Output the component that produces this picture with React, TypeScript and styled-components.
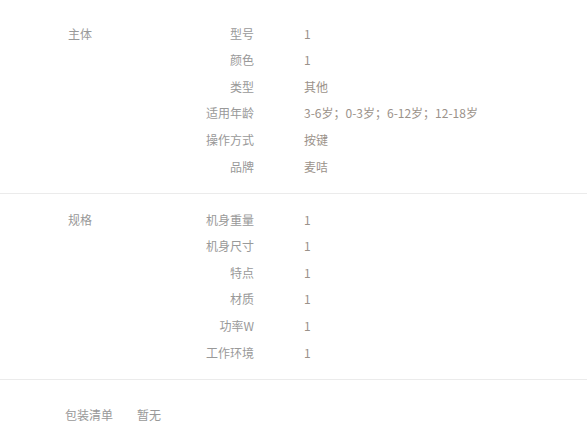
import React from 'react';
import styled, { createGlobalStyle } from 'styled-components';

const GlobalStyle = createGlobalStyle`
  body {
    margin: 0;
    background: #fff;
    font-family: "Noto Sans CJK SC", "Noto Sans", sans-serif;
    font-size: 12px;
    color: #999;
  }
`;

const Page = styled.div`
  width: 587px;
  padding-top: 8px;
`;

const Section = styled.div<{ last?: boolean }>`
  display: grid;
  grid-template-columns: 68px 86px 100px 50px 1fr;
  padding: 12.7px 0;
  border-bottom: ${p => (p.last ? 'none' : '1px solid #ebebeb')};
`;

const GroupTitle = styled.div`
  grid-column: 2;
  line-height: 26.6px;
  color: #999;
`;

const Rows = styled.div`
  grid-column: 3 / 6;
  display: grid;
  grid-template-columns: 100px 50px 1fr;
`;

const Label = styled.div`
  grid-column: 1;
  text-align: right;
  line-height: 26.6px;
  color: #999;
  white-space: nowrap;
`;

const Value = styled.div`
  grid-column: 3;
  line-height: 26.6px;
  color: #9b928a;
  white-space: nowrap;
`;

const Footer = styled.div`
  display: flex;
  gap: 24px;
  padding: 26px 0 0 65px;
  line-height: 18px;
  color: #999;
`;

type Row = [string, string];

const groups: { title: string; rows: Row[] }[] = [
  {
    title: '主体',
    rows: [
      ['型号', '1'],
      ['颜色', '1'],
      ['类型', '其他'],
      ['适用年龄', '3-6岁；0-3岁；6-12岁；12-18岁'],
      ['操作方式', '按键'],
      ['品牌', '麦咭'],
    ],
  },
  {
    title: '规格',
    rows: [
      ['机身重量', '1'],
      ['机身尺寸', '1'],
      ['特点', '1'],
      ['材质', '1'],
      ['功率W', '1'],
      ['工作环境', '1'],
    ],
  },
];

const App: React.FC = () => (
  <Page>
    <GlobalStyle />
    {groups.map(g => (
      <Section key={g.title}>
        <GroupTitle>{g.title}</GroupTitle>
        <Rows>
          {g.rows.map(([label, value]) => (
            <React.Fragment key={label}>
              <Label>{label}</Label>
              <Value>{value}</Value>
            </React.Fragment>
          ))}
        </Rows>
      </Section>
    ))}
    <Footer>
      <span>包装清单</span>
      <span>暂无</span>
    </Footer>
  </Page>
);

export default App;
